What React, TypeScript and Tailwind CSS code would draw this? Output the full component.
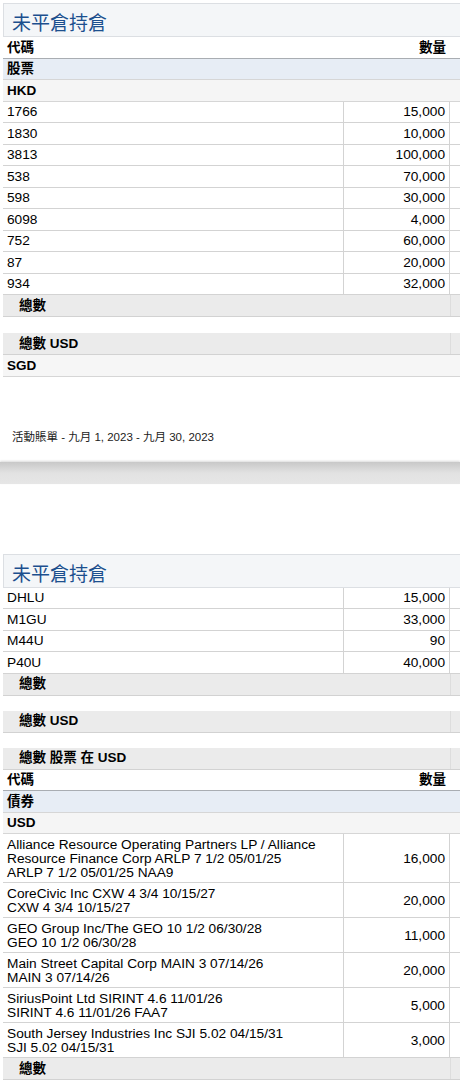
import type { ReactNode } from "react";

const FONT = { fontFamily: '"Liberation Sans", Arial, "Noto Sans CJK TC", sans-serif' };

const hkd = [
  ["1766", "15,000"],
  ["1830", "10,000"],
  ["3813", "100,000"],
  ["538", "70,000"],
  ["598", "30,000"],
  ["6098", "4,000"],
  ["752", "60,000"],
  ["87", "20,000"],
  ["934", "32,000"],
];

const sgd = [
  ["DHLU", "15,000"],
  ["M1GU", "33,000"],
  ["M44U", "90"],
  ["P40U", "40,000"],
];

const bonds = [
  {
    lines: [
      "Alliance Resource Operating Partners LP / Alliance",
      "Resource Finance Corp ARLP 7 1/2 05/01/25",
      "ARLP 7 1/2 05/01/25 NAA9",
    ],
    qty: "16,000",
    h: "h-[49px]",
  },
  { lines: ["CoreCivic Inc CXW 4 3/4 10/15/27", "CXW 4 3/4 10/15/27"], qty: "20,000", h: "h-[35px]" },
  { lines: ["GEO Group Inc/The GEO 10 1/2 06/30/28", "GEO 10 1/2 06/30/28"], qty: "11,000", h: "h-[35px]" },
  { lines: ["Main Street Capital Corp MAIN 3 07/14/26", "MAIN 3 07/14/26"], qty: "20,000", h: "h-[35px]" },
  { lines: ["SiriusPoint Ltd SIRINT 4.6 11/01/26", "SIRINT 4.6 11/01/26 FAA7"], qty: "5,000", h: "h-[35px]" },
  { lines: ["South Jersey Industries Inc SJI 5.02 04/15/31", "SJI 5.02 04/15/31"], qty: "3,000", h: "h-[35px]" },
];

const Title = () => (
  <div className="h-[34px] ml-[3px] border-l border-t border-b border-[#dcdfe3] bg-[#f4f6f8] flex items-center pl-[8px]">
    <span className="text-[19px] text-[#1c4f8e] leading-none pt-[7px]">未平倉持倉</span>
  </div>
);

const HeaderRow = () => (
  <div className="h-[21.5px] ml-[3px] flex items-center justify-between border-b border-[#a9adb2] pl-[4px] pr-[14px] pt-[1px] text-[13.5px] font-bold text-black">
    <span>代碼</span>
    <span>數量</span>
  </div>
);

const BandRow = ({ children, bg }: { children: ReactNode; bg: string }) => (
  <div className={`h-[21.5px] ml-[3px] flex items-center border-b border-[#d6d6d6] pl-[4px] pt-[1px] text-[13.5px] font-bold text-black ${bg}`}>
    {children}
  </div>
);

const TotalRow = ({ children }: { children: ReactNode }) => (
  <div className="h-[22px] ml-[3px] flex border-b border-[#d2d2d2] bg-[#ebebeb] text-[13.5px] font-bold text-black">
    <div className="flex-1 flex items-center pl-[16px] pt-[1px]">{children}</div>
    <div className="w-[10px] border-l border-[#dddddd]" />
  </div>
);

const DataRow = ({ children, qty, h }: { children: ReactNode; qty: string; h: string }) => (
  <div className={`${h} ml-[3px] flex border-b border-[#d3d3d3] text-[13.7px] text-black`}>
    <div className="w-[341px] flex flex-col justify-center pl-[4px] pt-[2px] border-r border-[#d3d3d3]">{children}</div>
    <div className="w-[106px] flex items-center justify-end pr-[4px] pt-[2px] border-r border-[#d3d3d3]">{qty}</div>
    <div className="flex-1" />
  </div>
);

export default function App() {
  return (
    <div className="w-[460px] h-[1087px] bg-white overflow-hidden" style={FONT}>
      <div className="pt-[3px]">
        <Title />
        <HeaderRow />
        <BandRow bg="bg-[#e7edf5]">股票</BandRow>
        <BandRow bg="bg-[#f5f5f5]">HKD</BandRow>
        {hkd.map(([code, qty]) => (
          <DataRow key={code} qty={qty} h="h-[21.5px]">
            {code}
          </DataRow>
        ))}
        <TotalRow>總數</TotalRow>
        <div className="h-[16px]" />
        <TotalRow>總數 USD</TotalRow>
        <BandRow bg="bg-[#f6f6f6]">SGD</BandRow>
      </div>

      <div className="h-[52px]" />
      <p className="pl-[12px] text-[11.5px] leading-[17px] text-[#222222]">活動賬單 - 九月 1, 2023 - 九月 30, 2023</p>
      <div className="h-[16px]" />

      <div className="h-[22px] bg-gradient-to-b from-[#c8c8c8] via-[#e2e2e2] to-[#e6e6e6] shadow-[0_-1px_2px_rgba(0,0,0,0.15)]" />

      <div className="h-[70px]" />
      <Title />
      {sgd.map(([code, qty]) => (
        <DataRow key={code} qty={qty} h="h-[21.5px]">
          {code}
        </DataRow>
      ))}
      <TotalRow>總數</TotalRow>
      <div className="h-[15px]" />
      <TotalRow>總數 USD</TotalRow>
      <div className="h-[15px]" />
      <TotalRow>總數 股票 在 USD</TotalRow>
      <HeaderRow />
      <BandRow bg="bg-[#e7edf5]">債券</BandRow>
      <BandRow bg="bg-[#f5f5f5]">USD</BandRow>
      {bonds.map((b) => (
        <DataRow key={b.qty + b.lines[0]} qty={b.qty} h={b.h}>
          {b.lines.map((l) => (
            <div key={l} className="leading-[14px]">
              {l}
            </div>
          ))}
        </DataRow>
      ))}
      <TotalRow>總數</TotalRow>
    </div>
  );
}
